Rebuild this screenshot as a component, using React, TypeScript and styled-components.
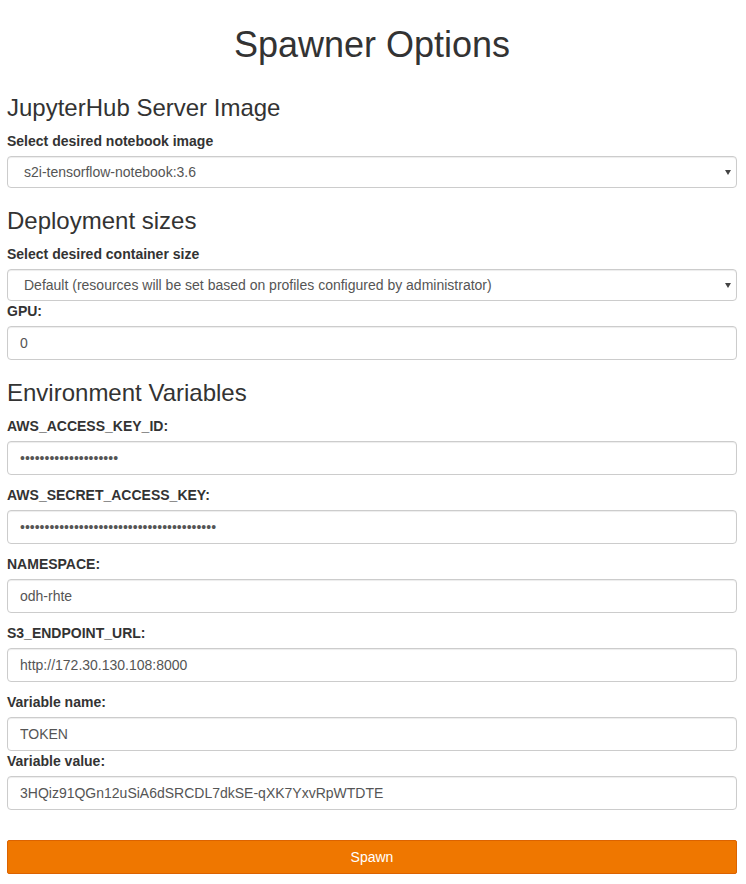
import styled, { createGlobalStyle } from 'styled-components';

const GlobalStyle = createGlobalStyle`
  body {
    margin: 0;
    background: #fff;
    color: #333;
    font-family: 'Liberation Sans', Arial, sans-serif;
    font-size: 14px;
    line-height: 1.42857;
  }
  * {
    box-sizing: border-box;
  }
`;

const Page = styled.form`
  padding: 25px 9px 10px 7px;
`;

const Title = styled.h1`
  margin: 0 0 30px;
  text-align: center;
  font-size: 36px;
  font-weight: 500;
  line-height: 40px;
  color: #333;
`;

const SectionTitle = styled.h3`
  margin: 20px 0 10px;
  font-size: 24px;
  font-weight: 500;
  line-height: 26px;
  color: #333;
`;

const Field = styled.div<{ $gap?: number }>`
  margin-bottom: ${(p) => p.$gap ?? 0}px;
`;

const Label = styled.label`
  display: block;
  margin-bottom: 5px;
  font-weight: bold;
  line-height: 20px;
`;

const SelectWrap = styled.div`
  position: relative;

  &::after {
    content: '';
    position: absolute;
    right: 6px;
    top: 14px;
    border-left: 3.5px solid transparent;
    border-right: 3.5px solid transparent;
    border-top: 5px solid #444;
    pointer-events: none;
  }
`;

const Select = styled.select`
  display: block;
  width: 100%;
  height: 32px;
  padding: 0 20px 0 16px;
  border: 1px solid #ccc;
  border-radius: 4px;
  background: #fff;
  color: #555;
  font-family: inherit;
  font-size: 14px;
  appearance: none;
  box-shadow: inset 0 1px 1px rgba(0, 0, 0, 0.075);
`;

const Input = styled.input`
  display: block;
  width: 100%;
  height: 34px;
  padding: 6px 12px;
  border: 1px solid #ccc;
  border-radius: 4px;
  background: #fff;
  color: #555;
  font-family: inherit;
  font-size: 14px;
  box-shadow: inset 0 1px 1px rgba(0, 0, 0, 0.075);
`;

const SpawnButton = styled.button`
  display: block;
  width: 100%;
  height: 34px;
  margin-top: 30px;
  border: 1px solid #dc6300;
  border-radius: 2px;
  background: #ef7700;
  color: #fff;
  font-family: inherit;
  font-size: 14px;
  cursor: pointer;
`;

const envFields = [
  { label: 'AWS_ACCESS_KEY_ID:', value: 'AKIAXXXXXXXXXXXXXXXX', secret: true },
  { label: 'AWS_SECRET_ACCESS_KEY:', value: 'XXXXXXXXXXXXXXXXXXXXXXXXXXXXXXXXXXXXXXXX', secret: true },
  { label: 'NAMESPACE:', value: 'odh-rhte' },
  { label: 'S3_ENDPOINT_URL:', value: 'http://172.30.130.108:8000' },
];

export default function App() {
  return (
    <>
      <GlobalStyle />
      <Page onSubmit={(e) => e.preventDefault()}>
        <Title>Spawner Options</Title>

        <SectionTitle>JupyterHub Server Image</SectionTitle>
        <Label>Select desired notebook image</Label>
        <SelectWrap>
          <Select defaultValue="s2i-tensorflow-notebook:3.6">
            <option>s2i-tensorflow-notebook:3.6</option>
          </Select>
        </SelectWrap>

        <SectionTitle>Deployment sizes</SectionTitle>
        <Label>Select desired container size</Label>
        <SelectWrap>
          <Select defaultValue="default">
            <option value="default">
              Default (resources will be set based on profiles configured by administrator)
            </option>
          </Select>
        </SelectWrap>
        <Label>GPU:</Label>
        <Input defaultValue="0" />

        <SectionTitle>Environment Variables</SectionTitle>
        {envFields.map((f) => (
          <Field key={f.label} $gap={10}>
            <Label>{f.label}</Label>
            <Input type={f.secret ? 'password' : 'text'} defaultValue={f.value} />
          </Field>
        ))}
        <Field>
          <Label>Variable name:</Label>
          <Input defaultValue="TOKEN" />
        </Field>
        <Field>
          <Label>Variable value:</Label>
          <Input defaultValue="3HQiz91QGn12uSiA6dSRCDL7dkSE-qXK7YxvRpWTDTE" />
        </Field>

        <SpawnButton type="submit">Spawn</SpawnButton>
      </Page>
    </>
  );
}
